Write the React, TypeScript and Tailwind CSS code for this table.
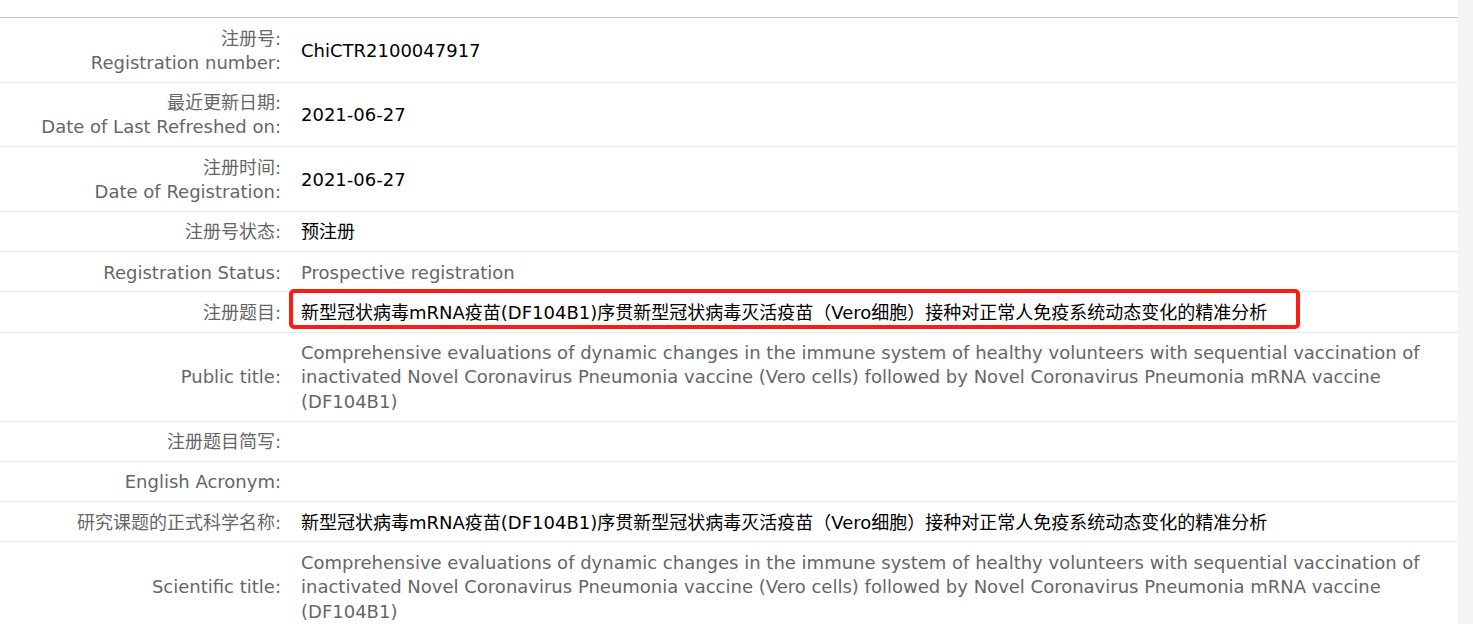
const rows: {
  label: string[];
  value?: string;
  tone?: "dark" | "gray";
  marked?: boolean;
}[] = [
  { label: ["注册号:", "Registration number:"], value: "ChiCTR2100047917", tone: "dark" },
  { label: ["最近更新日期:", "Date of Last Refreshed on:"], value: "2021-06-27", tone: "dark" },
  { label: ["注册时间:", "Date of Registration:"], value: "2021-06-27", tone: "dark" },
  { label: ["注册号状态:"], value: "预注册", tone: "dark" },
  { label: ["Registration Status:"], value: "Prospective registration", tone: "gray" },
  {
    label: ["注册题目:"],
    value: "新型冠状病毒mRNA疫苗(DF104B1)序贯新型冠状病毒灭活疫苗（Vero细胞）接种对正常人免疫系统动态变化的精准分析",
    tone: "dark",
    marked: true,
  },
  {
    label: ["Public title:"],
    value:
      "Comprehensive evaluations of dynamic changes in the immune system of healthy volunteers with sequential vaccination of inactivated Novel Coronavirus Pneumonia vaccine (Vero cells) followed by Novel Coronavirus Pneumonia mRNA vaccine (DF104B1)",
    tone: "gray",
  },
  { label: ["注册题目简写:"] },
  { label: ["English Acronym:"] },
  {
    label: ["研究课题的正式科学名称:"],
    value: "新型冠状病毒mRNA疫苗(DF104B1)序贯新型冠状病毒灭活疫苗（Vero细胞）接种对正常人免疫系统动态变化的精准分析",
    tone: "dark",
  },
  {
    label: ["Scientific title:"],
    value:
      "Comprehensive evaluations of dynamic changes in the immune system of healthy volunteers with sequential vaccination of inactivated Novel Coronavirus Pneumonia vaccine (Vero cells) followed by Novel Coronavirus Pneumonia mRNA vaccine (DF104B1)",
    tone: "gray",
  },
];

export default function App() {
  return (
    <div
      className="flex h-[624px] w-full overflow-hidden bg-white text-[18px] leading-[24.3px]"
      style={{ fontFamily: '"DejaVu Sans", Verdana, "Noto Sans CJK SC", sans-serif' }}
    >
      <div className="flex-1 pt-[17px]">
        <div className="border-t border-[#c8c8c8]">
          {rows.map((row, i) => (
            <div key={i} className="relative flex items-center border-b border-[#e9e9e9]">
              <div className="w-[290px] shrink-0 pt-[8.5px] pb-[6.5px] pr-[9px] text-right text-[#666]">
                {row.label.map((l) => (
                  <div key={l}>{l}</div>
                ))}
              </div>
              <div
                className={`flex-1 pt-[8.5px] pb-[6.5px] pl-[11px] pr-[10px] ${
                  row.tone === "gray" ? "text-[#666]" : "text-black"
                }`}
              >
                {row.value}
              </div>
              {row.marked && (
                <div className="pointer-events-none absolute left-[289px] top-[-3px] h-[40px] w-[1011px] rounded-[5px] border-4 border-[#fb1c14]" />
              )}
            </div>
          ))}
        </div>
      </div>
      <div className="w-[15px] shrink-0 bg-[#f4f4f4]" />
    </div>
  );
}
